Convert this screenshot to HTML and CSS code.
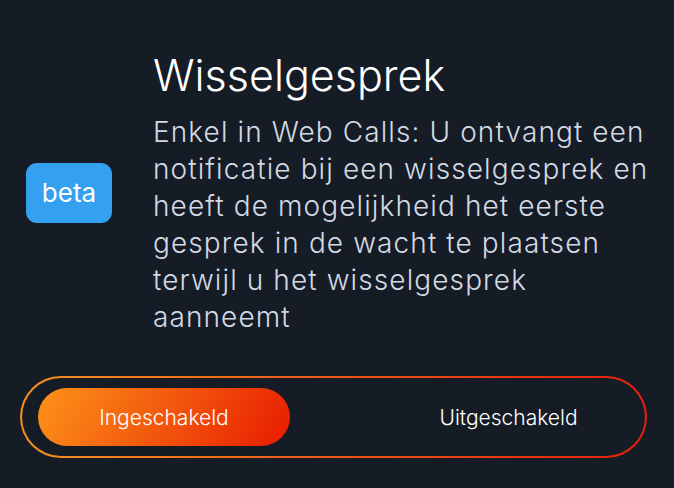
FILE: index.html
```html
<!DOCTYPE html>
<html lang="nl">
<head>
<meta charset="UTF-8" />
<meta name="viewport" content="width=device-width, initial-scale=1" />
<title>Wisselgesprek</title>
<link rel="stylesheet" href="styles.css">
</head>
<body>

<div class="feature">
  <div class="badge-col">
    <span class="badge">beta</span>
  </div>
  <div class="info">
    <h2>Wisselgesprek</h2>
    <p>Enkel in Web Calls: U ontvangt een notificatie bij een wisselgesprek en heeft de mogelijkheid het eerste gesprek in de wacht te plaatsen terwijl u het wisselgesprek aanneemt</p>
  </div>
</div>

<div class="toggle">
  <button class="opt active">Ingeschakeld</button>
  <button class="opt">Uitgeschakeld</button>
</div>

</body>
</html>
```

FILE: styles.css
```css
body {
  font-family: Inter, "Noto Sans", sans-serif;
  background: #151c26;
  color: white;
  margin: 0; padding: 0;
  width: 674px;
  height: 488px;
  overflow: hidden;
}
.feature {
  display: flex;
  align-items: center;
  padding: 49px 0 0 26px;
}
.badge-col {
  width: 127px;
  flex-shrink: 0;
}
.badge {
  display: inline-flex;
  align-items: center;
  justify-content: center;
  width: 86px;
  height: 60px;
  background: #33a0f0;
  border-radius: 11px;
  font-size: 26px;
  font-weight: 400;
}
.info h2 {
  margin: 0 0 13px;
  font-size: 43px;
  font-weight: 300;
  line-height: 52px;
}
.info p {
  margin: 0;
  font-size: 28px;
  font-weight: 300;
  line-height: 37px;
  letter-spacing: 1.1px;
  color: #d3d9e2;
  width: 500px;
}
.toggle {
  display: flex;
  margin: 40px 27px 0 20px;
  height: 82px;
  box-sizing: border-box;
  padding: 10px 16px;
  border: 2px solid transparent;
  border-radius: 41px;
  background:
    linear-gradient(#151c26, #151c26) padding-box,
    linear-gradient(90deg, #f7901e, #e5200c) border-box;
}
.opt {
  flex: 1;
  border: none;
  background: none;
  color: white;
  font-family: inherit;
  font-size: 21px;
  font-weight: 300;
  border-radius: 30px;
  padding: 0 0 0 98px;
}
.opt.active {
  flex: 0 0 252px;
  padding: 0;
  background: linear-gradient(120deg, #fd931a, #e81b00);
}
```
